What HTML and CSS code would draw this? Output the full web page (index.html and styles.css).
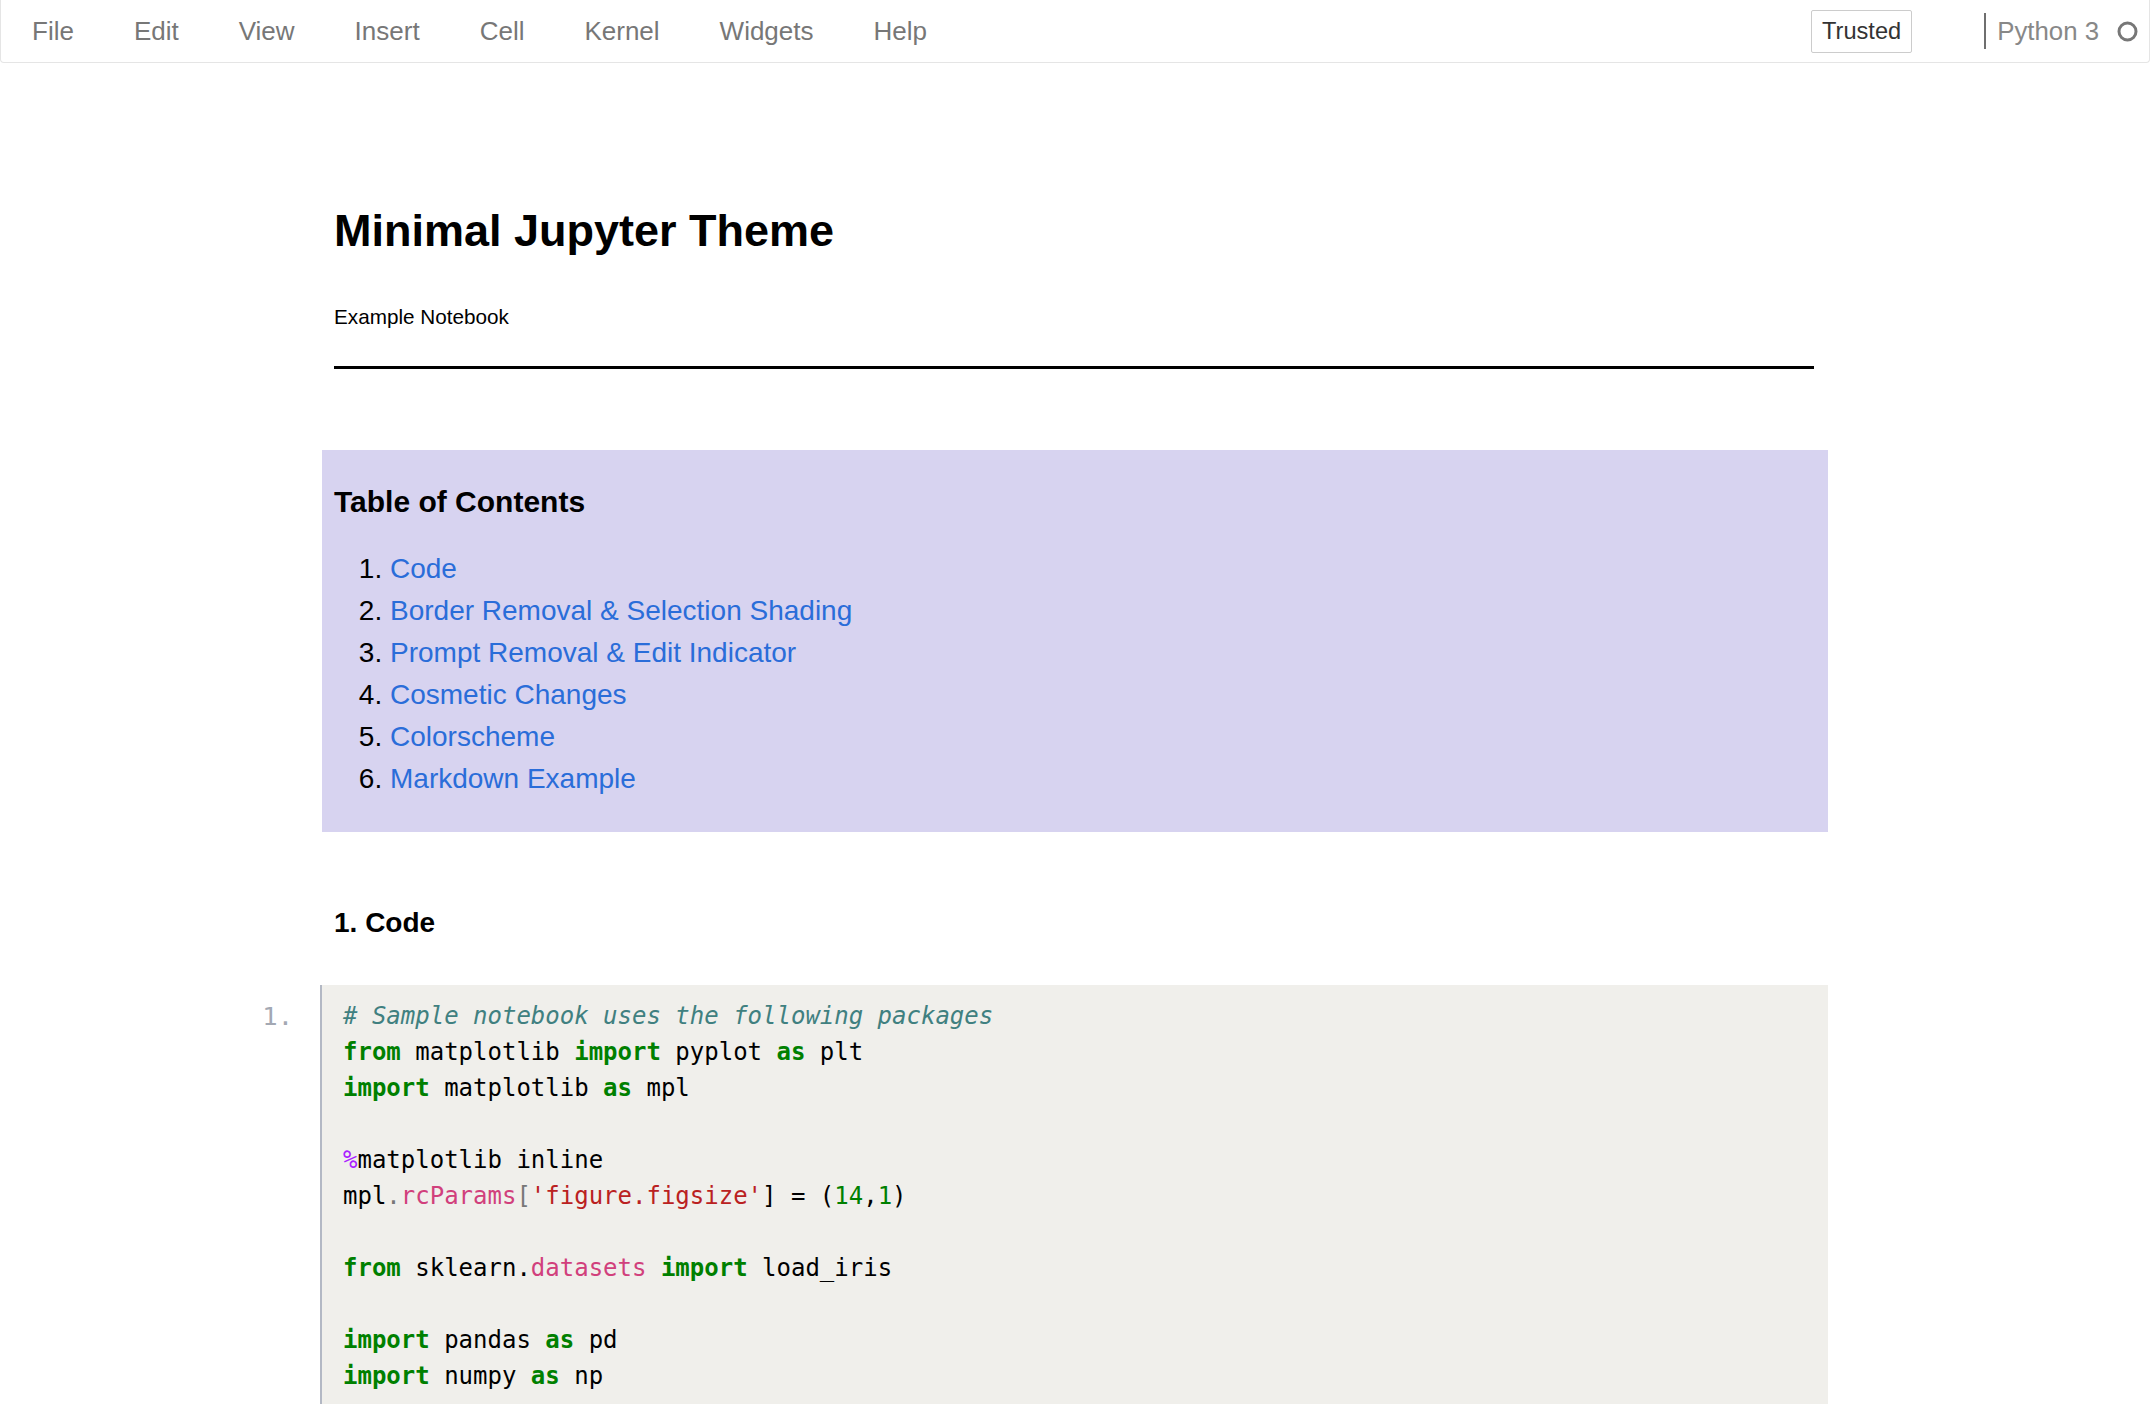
FILE: index.html
```html
<!DOCTYPE html>
<html lang="en">
<head>
<meta charset="utf-8">
<title>Minimal Jupyter Theme</title>
<link rel="stylesheet" href="styles.css">
</head>
<body>
<header class="menubar">
  <nav class="menu">
    <span class="menu-item">File</span>
    <span class="menu-item">Edit</span>
    <span class="menu-item">View</span>
    <span class="menu-item">Insert</span>
    <span class="menu-item">Cell</span>
    <span class="menu-item">Kernel</span>
    <span class="menu-item">Widgets</span>
    <span class="menu-item">Help</span>
  </nav>
  <div class="status">
    <span class="trusted">Trusted</span>
    <span class="kernel-sep"></span>
    <span class="kernel-name">Python 3</span>
    <svg class="kernel-icon" viewBox="0 0 21 21"><circle cx="10.5" cy="10.5" r="8.5" fill="none" stroke="#777" stroke-width="3"/></svg>
  </div>
</header>

<main class="notebook">
  <section class="cell">
    <div class="prompt"></div>
    <div class="text-body">
      <h1 class="title">Minimal Jupyter Theme</h1>
      <p class="subtitle">Example Notebook</p>
      <div class="rule"></div>
    </div>
  </section>

  <section class="cell toc-cell">
    <div class="prompt"></div>
    <div class="toc">
      <h3 class="toc-title">Table of Contents</h3>
      <ol class="toc-list">
        <li><a href="#code">Code</a></li>
        <li><a href="#border">Border Removal &amp; Selection Shading</a></li>
        <li><a href="#prompt">Prompt Removal &amp; Edit Indicator</a></li>
        <li><a href="#cosmetic">Cosmetic Changes</a></li>
        <li><a href="#colorscheme">Colorscheme</a></li>
        <li><a href="#markdown">Markdown Example</a></li>
      </ol>
    </div>
  </section>

  <section class="cell heading-cell">
    <div class="prompt"></div>
    <div class="text-body">
      <h2 class="section-title" id="code">1. Code</h2>
    </div>
  </section>

  <section class="cell code-cell">
    <div class="prompt code-prompt">1.</div>
    <div class="code">
<pre><span class="c"># Sample notebook uses the following packages</span>
<span class="k">from</span> matplotlib <span class="k">import</span> pyplot <span class="k">as</span> plt
<span class="k">import</span> matplotlib <span class="k">as</span> mpl

<span class="m">%</span>matplotlib inline
mpl<span class="g">.</span><span class="pr">rcParams</span><span class="g">[</span><span class="s">'figure.figsize'</span>] = (<span class="n">14</span>,<span class="n">1</span>)

<span class="k">from</span> sklearn.<span class="pr">datasets</span> <span class="k">import</span> load_iris

<span class="k">import</span> pandas <span class="k">as</span> pd
<span class="k">import</span> numpy <span class="k">as</span> np</pre>
    </div>
  </section>
</main>
</body>
</html>
```

FILE: styles.css
```css
html, body {
  margin: 0;
  padding: 0;
  background: #ffffff;
}

body {
  font-family: "Liberation Sans", Arial, sans-serif;
  color: #000000;
}

/* ---------- menu bar ---------- */
.menubar {
  display: flex;
  align-items: center;
  height: 62px;
  border: 1px solid #e5e5e5;
  border-top: none;
  border-radius: 0 0 4px 4px;
  padding: 0 11px 0 1px;
}

.menu {
  display: flex;
  align-items: center;
}

.menu-item {
  font-size: 26px;
  line-height: 26px;
  color: #777777;
  padding: 0 30px;
}

.status {
  margin-left: auto;
  display: flex;
  align-items: center;
}

.trusted {
  font-size: 23.6px;
  line-height: 23px;
  color: #333333;
  border: 1px solid #cccccc;
  border-radius: 2px;
  padding: 9px 10px;
  margin-right: 72px;
}

.kernel-sep {
  width: 2px;
  height: 36px;
  background: #6f6f6f;
  margin-right: 11px;
}

.kernel-name {
  font-size: 25.8px;
  line-height: 26px;
  color: #888888;
  margin-right: 18px;
}

.kernel-icon {
  width: 21px;
  height: 21px;
  display: block;
}

/* ---------- notebook ---------- */
.notebook {
  margin-left: 240px;
  width: 1588px;
  padding-top: 143px;
}

.cell {
  display: grid;
  grid-template-columns: 80px 1508px;
}

.text-body {
  padding: 0 14px 0 14px;
}

.title {
  margin: 0;
  font-size: 45px;
  line-height: 49.5px;
  font-weight: bold;
}

.subtitle {
  margin: 49.5px 0 0;
  font-size: 20.7px;
  line-height: 24px;
}

.rule {
  margin-top: 36.5px;
  height: 3px;
  background: #000000;
}

/* ---------- table of contents ---------- */
.toc-cell {
  margin-top: 81px;
}

.toc {
  margin-left: 2px;
  background: #d7d3f0;
  padding: 34.5px 14px 32px 12px;
}

.toc-title {
  margin: 0;
  font-size: 30px;
  line-height: 36px;
  font-weight: bold;
}

.toc-list {
  margin: 27.5px 0 0;
  padding-left: 56px;
  font-size: 28px;
  line-height: 42px;
}

.toc-list a {
  color: #2a6dd9;
  text-decoration: none;
}

/* ---------- section heading ---------- */
.heading-cell {
  margin-top: 74.5px;
}

.section-title {
  margin: 0;
  font-size: 28px;
  line-height: 34px;
  font-weight: bold;
}

/* ---------- code cell ---------- */
.code-cell {
  margin-top: 45px;
}

.code-prompt {
  text-align: right;
  padding: 12.5px 27px 0 0;
  font-family: "DejaVu Sans Mono", monospace;
  font-size: 25.5px;
  line-height: 36px;
  color: #a3a8b3;
}

.code {
  border-left: 2px solid #b3b8c4;
  background: #f0efeb;
  padding: 12.5px 21px 26px 21px;
}

.code pre {
  margin: 0;
  font-family: "DejaVu Sans Mono", monospace;
  font-size: 24px;
  line-height: 36px;
  color: #000000;
}

.c { color: #408080; font-style: italic; }
.k { color: #008000; font-weight: bold; }
.m { color: #aa22ff; }
.pr { color: #d1407c; }
.s { color: #ba2121; }
.n { color: #008000; }
.g { color: #777777; }
```
